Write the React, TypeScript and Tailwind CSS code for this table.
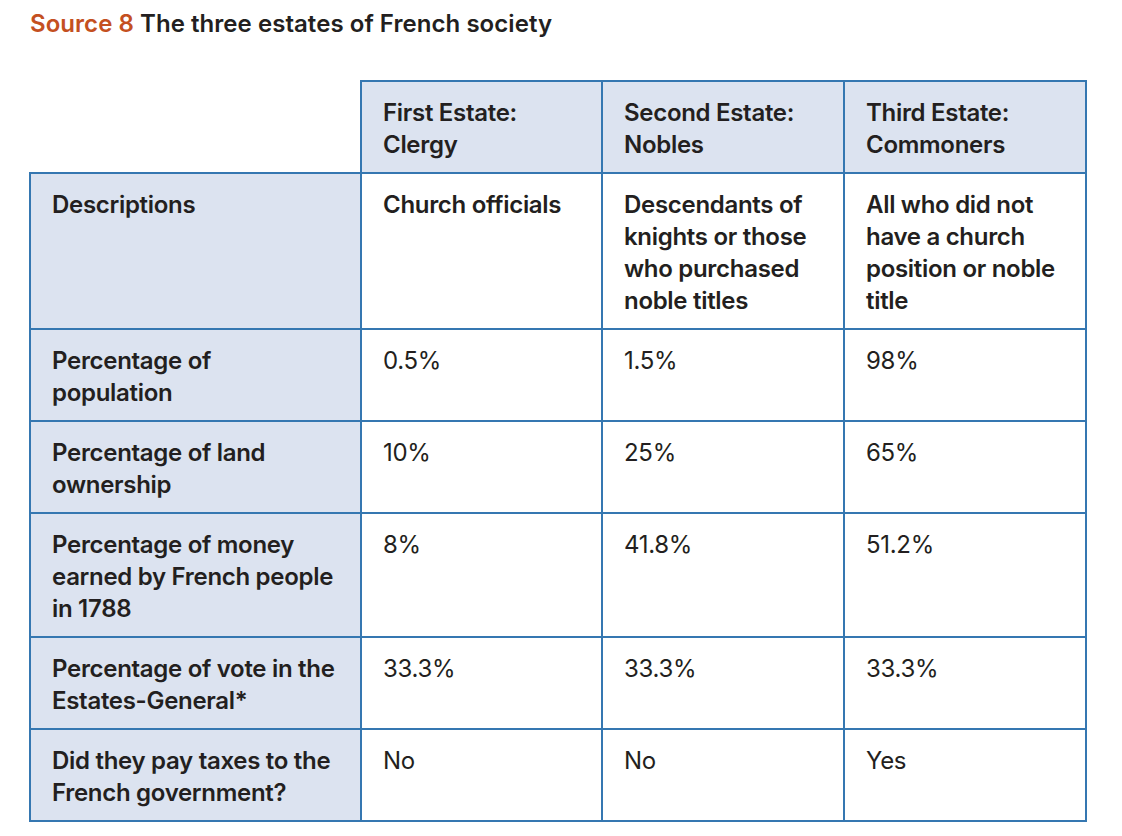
import React from 'react';

interface Row {
  label: string[];
  values: string[][];
  bold?: boolean;
}

const rows: Row[] = [
  {
    label: ['Descriptions'],
    values: [
      ['Church officials'],
      ['Descendants of', 'knights or those', 'who purchased', 'noble titles'],
      ['All who did not', 'have a church', 'position or noble', 'title'],
    ],
    bold: true,
  },
  { label: ['Percentage of', 'population'], values: [['0.5%'], ['1.5%'], ['98%']] },
  { label: ['Percentage of land', 'ownership'], values: [['10%'], ['25%'], ['65%']] },
  { label: ['Percentage of money', 'earned by French people', 'in 1788'], values: [['8%'], ['41.8%'], ['51.2%']] },
  { label: ['Percentage of vote in the', 'Estates-General*'], values: [['33.3%'], ['33.3%'], ['33.3%']] },
  { label: ['Did they pay taxes to the', 'French government?'], values: [['No'], ['No'], ['Yes']] },
];

const headers = [
  ['First Estate:', 'Clergy'],
  ['Second Estate:', 'Nobles'],
  ['Third Estate:', 'Commoners'],
];

function Lines({ lines }: { lines: string[] }) {
  return (
    <>
      {lines.map((l, i) => (
        <span key={i} className="block whitespace-nowrap">
          {l}
        </span>
      ))}
    </>
  );
}

export default function App() {
  return (
    <div className="min-h-screen bg-white pt-[8px] text-[#231f20]" style={{ fontFamily: 'Inter, "Noto Sans", sans-serif' }}>
      <h1 className="pl-[30px] text-[24px] font-semibold leading-[32px] tracking-[0.05px]">
        <span className="text-[#c4501f]">Source 8</span> The three estates of French society
      </h1>

      <table className="ml-[29px] mt-[40px] w-[1056px] table-fixed border-collapse text-[24px] leading-[32px] tracking-[-0.3px]">
        <colgroup>
          <col className="w-[331px]" />
          <col className="w-[241px]" />
          <col className="w-[242px]" />
          <col className="w-[242px]" />
        </colgroup>
        <thead>
          <tr>
            <th className="border-0" />
            {headers.map((h) => (
              <th
                key={h[0]}
                className="border-2 border-[#3577b1] bg-[#dce3f0] pb-[11px] pl-[21px] pr-[19px] pt-[15px] text-left align-top font-semibold"
              >
                <Lines lines={h} />
              </th>
            ))}
          </tr>
        </thead>
        <tbody>
          {rows.map((row) => (
            <tr key={row.label[0] + row.label.length}>
              <td className="border-2 border-[#3577b1] bg-[#dce3f0] pb-[11px] pl-[21px] pr-[19px] pt-[15px] align-top font-semibold">
                <Lines lines={row.label} />
              </td>
              {row.values.map((v, i) => (
                <td
                  key={i}
                  className={`border-2 border-[#3577b1] pb-[11px] pl-[21px] pr-[19px] pt-[15px] align-top ${row.bold ? 'font-semibold' : 'font-normal'}`}
                >
                  <Lines lines={v} />
                </td>
              ))}
            </tr>
          ))}
        </tbody>
      </table>
    </div>
  );
}
